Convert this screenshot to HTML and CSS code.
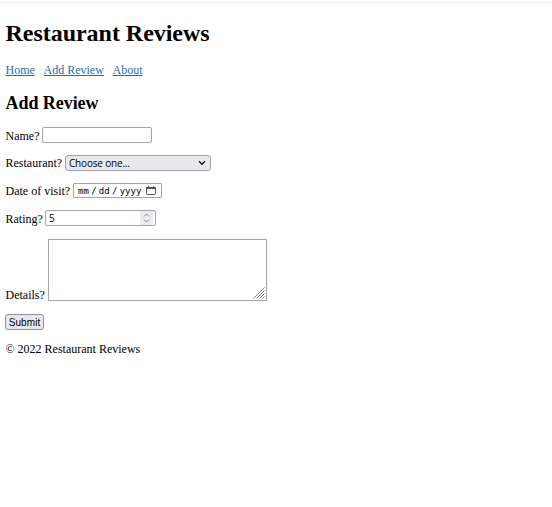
FILE: index.html
```html
<!DOCTYPE html>
<html lang="en">
<head>
<meta charset="utf-8">
<title>Restaurant Reviews</title>
<link rel="stylesheet" href="styles.css">
</head>
<body>
<header>
<h1>Restaurant Reviews</h1>
<nav><a href="#">Home</a><a href="#">Add Review</a><a href="#">About</a></nav>
</header>
<main>
<h2>Add Review</h2>
<form>
<div class="row name"><label for="name">Name?</label><input id="name" class="field" type="text"></div>
<div class="row restaurant"><label>Restaurant?</label><div class="field select"><span>Choose one...</span><svg width="8" height="6" viewBox="0 0 8 6"><path d="M1 1.3 4 4.3 7 1.3" fill="none" stroke="#111" stroke-width="1.4"/></svg></div></div>
<div class="row visit"><label>Date of visit?</label><div class="field date"><span>mm</span><i>/</i><span>dd</span><i>/</i><span>yyyy</span><svg width="10" height="10" viewBox="0 0 10 10"><path d="M.5 2.5h9v5.2q0 .8-.8.8H1.3q-.8 0-.8-.8z" fill="none" stroke="#555"/><path d="M0 1h10v2H0zM2 0h1v2H2zM7 0h1v2H7z" fill="#555"/></svg></div></div>
<div class="row rating"><label>Rating?</label><div class="field number"><span>5</span><div class="spin"><svg width="7" height="10" viewBox="0 0 7 10"><path d="M1 3.5 3.5 1 6 3.5M1 6.5 3.5 9 6 6.5" fill="none" stroke="#8c8c92"/></svg></div></div></div>
<div class="row details"><label>Details?</label><div class="field area"><svg width="12" height="12" viewBox="0 0 12 12"><path d="M.5 11.5l11-11M3.5 11.5l8-8M6.5 11.5l5-5M9.5 11.5l2-2" fill="none" stroke="#777" stroke-width=".9"/></svg></div></div>
<button type="button">Submit</button>
</form>
</main>
<footer>© 2022 Restaurant Reviews</footer>
</body>
</html>
```
FILE: styles.css
```css
* { box-sizing: border-box; }
body { margin: 0; padding: 0 6px 0 5.5px; border-top: 1px solid #fff; background: #fff; color: #000; font: 12px/14px "Liberation Serif", serif; }
header { padding-top: 16px; }
body::before { content: ""; display: block; height: 1px; margin: 1px -6px 0; background: #e8e8e8; }
h1 { margin: 0; font-size: 24px; line-height: 28px; letter-spacing: -.03px; }
nav { display: flex; gap: 8.7px; margin-top: 16px; }
a { color: #1a6fb5; text-decoration: underline; }
h2 { margin: 16px 0 0; font-size: 18px; line-height: 21px; letter-spacing: -.05px; }
form { margin-top: 13px; }
.row { display: flex; align-items: center; height: 16px; margin-bottom: 12px; }
label { flex: none; padding-top: 1px; white-space: nowrap; }
.field { display: flex; align-items: center; height: 16px; border: 1px solid #a4a4ae; border-radius: 2px; background: #fff; font: 10px/14px "Open Sans", sans-serif; }
.name label { width: 36.5px; }
.name input { width: 110px; padding: 0 3px; }
.restaurant label { width: 59.5px; padding-top: 0; }
.select { width: 146px; padding: 0 4px 0 3px; justify-content: space-between; background: #e9e9ed; border-radius: 3px; letter-spacing: -.18px; }
.row.visit { height: 15px; }
.visit label { width: 67.5px; padding-top: 0; }
.date { width: 89px; height: 15px; padding-left: 4px; border-radius: 1px; font: 9px/13px "DejaVu Sans Mono", monospace; }
.date span, .date i { padding-top: 1px; }
.date i { width: 10px; font-style: normal; text-align: center; }
.date svg { margin-left: 5px; }
.rating label { width: 39.5px; }
.number { width: 111px; padding: 0 2px 0 3px; justify-content: space-between; }
.spin { display: flex; align-items: center; justify-content: center; width: 13px; height: 14px; background: #ececf0; }
.details { height: 62px; margin: 13px 0; align-items: flex-end; }
.details label { width: 42.5px; line-height: 12px; }
.area { width: 219px; height: 62px; border-radius: 0; align-items: flex-end; justify-content: flex-end; padding: 1px; }
button { display: block; width: 39px; height: 16px; margin: 0 0 0 -.5px; padding: 1px 0 0; border: 1px solid #8f8f9d; border-radius: 3px; background: #e9e9ed; color: #000; font: 10px/13px "Liberation Sans", sans-serif; letter-spacing: .1px; }
footer { margin-top: 12px; }
```
